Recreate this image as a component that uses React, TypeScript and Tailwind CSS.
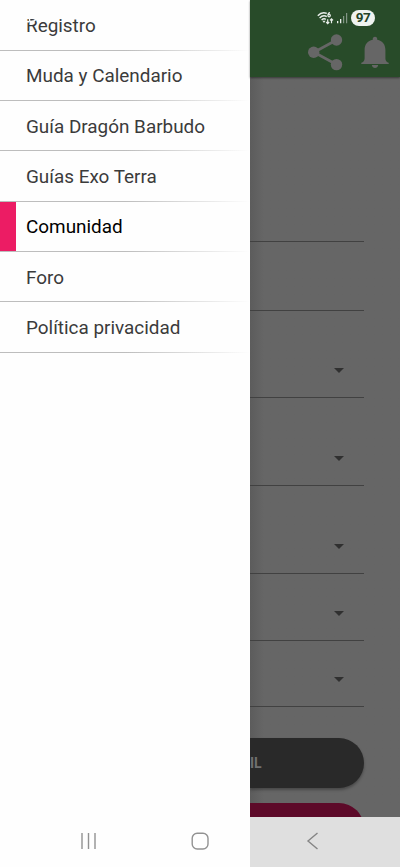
const menuItems = [
  { label: 'Registro' },
  { label: 'Muda y Calendario' },
  { label: 'Guía Dragón Barbudo' },
  { label: 'Guías Exo Terra' },
  { label: 'Comunidad', active: true },
  { label: 'Foro' },
  { label: 'Política privacidad' },
];

const fields = [
  { height: 'h-[163px]', select: false },
  { height: 'h-[69px]', select: false },
  { height: 'h-[87.5px]', select: true },
  { height: 'h-[88px]', select: true },
  { height: 'h-[87.5px]', select: true },
  { height: 'h-[67px]', select: true },
  { height: 'h-[66.5px]', select: true },
];

function StatusIcons() {
  return (
    <div className="flex h-4 items-center pl-[67px]">
      <svg className="h-4 w-[17px] shrink-0" viewBox="0 0 17 16" fill="none" stroke="#e9eeea">
        <path d="M0.8 5.7Q5 1.2 9.8 3.4M2.6 7.9Q6.2 4.3 9.8 6.6M4.6 10Q6.8 8 8.8 9.4" strokeWidth="1.4" />
        <path d="M5.4 10.8L8.6 10.8L7 13Z" fill="#e9eeea" stroke="none" />
        <path d="M13 2.6Q11 2.8 10.9 5.3M10.9 5.6a1.2 1.2 0 1 0 2.4 0a1.2 1.2 0 1 0-2.4 0" strokeWidth="1.2" />
        <path d="M10.7 9.2V13.5M9.2 12L10.7 13.7L12.2 12M14.5 13.2V9M13 10.4L14.5 8.8L16 10.4" strokeWidth="1.2" />
      </svg>
      <svg className="ml-[3px] h-4 w-[11px] shrink-0" viewBox="0 0 11 16">
        <path d="M0 11h1.3v2.2H0zM3 9h1.3v4.2H3z" fill="#e9eeea" />
        <path d="M6 6h1.2v7.2H6zM9 3h1.2v10.2H9z" fill="#839686" />
      </svg>
      <span className="ml-[3px] flex h-4 w-6 items-center justify-center rounded-full bg-[#eff3f0] font-['Roboto','Liberation_Sans',sans-serif] text-[13.5px] font-bold leading-none tracking-[-0.5px] text-[#244326]">
        97
      </span>
    </div>
  );
}

function Header() {
  return (
    <header className="relative z-10 h-[77px] shrink-0 bg-[#284b29] pt-[10px] shadow-[0_1px_2px_rgba(0,0,0,0.45)]">
      <StatusIcons />
      <div className="flex pl-[57px] pt-[7px]">
        <svg className="h-[38px] w-[37px]" viewBox="0 0 37 38" fill="#666">
          <path d="M29.5 7L7 19.3L29.5 31.5" fill="none" stroke="#666" strokeWidth="2.7" />
          <circle cx="29.5" cy="7" r="5.7" />
          <circle cx="6.7" cy="19.3" r="5.7" />
          <circle cx="29.5" cy="31.6" r="5.7" />
        </svg>
        <svg className="ml-4 h-[38px] w-[30px]" viewBox="0 0 30 38" fill="#666">
          <path d="M12.8 6.8C11.9 2.8 18.1 2.8 17.2 6.8C22.5 7.7 25.4 11.5 25.4 17V25.5C25.4 28 26.7 29 28.7 29.8V31H1.3V29.8C3.3 29 4.6 28 4.6 25.5V17C4.6 11.5 7.5 7.7 12.8 6.8Z" />
          <path d="M11.8 32H18.2C17.8 36 12.2 36 11.8 32Z" />
        </svg>
      </div>
    </header>
  );
}

export default function App() {
  return (
    <div className="flex h-[867px] w-[400px] overflow-hidden bg-white font-['Roboto','Liberation_Sans',sans-serif]">
      <aside className="flex w-[250px] shrink-0 flex-col bg-[#fefefe]">
        <nav className="relative">
          {menuItems.map((item) => (
            <div key={item.label} className={item.label === 'Registro' ? 'flex h-[50.8px] flex-col' : 'flex h-[50.33px] flex-col'}>
              <div className="flex min-h-0 flex-1">
                <div className={item.active ? 'w-4 bg-[#ec1c64]' : 'w-4'} />
                <span
                  className={
                    item.active
                      ? 'flex items-center pl-[10px] pt-[2.4px] text-[18.9px] text-black'
                      : 'flex items-center pl-[10px] pt-[2.4px] text-[18.9px] text-[#3b3b3b]'
                  }
                >
                  {item.label}
                </span>
              </div>
              <div className="h-px shrink-0 bg-linear-to-r from-[#bdbdbd] from-50% to-[#fefefe]" />
            </div>
          ))}
          {/* lower edge of the white status bar clock, over the first entry */}
          <svg className="absolute left-[26px] top-[17px] h-[7px] w-[50px]" viewBox="0 0 50 7" fill="none" stroke="#fefefe" strokeWidth="1.5">
            <path d="M0 4.7H3M3.5 0V4.7M6 4.5Q9 4.5 10.5 1M12.5 4.5H15M21 4.7H24M29 4.5H32" />
          </svg>
        </nav>
        <footer className="mt-auto flex h-[52px] items-center">
          <svg className="ml-20 h-[18px] w-[17px]" viewBox="0 0 17 18" stroke="#929292" strokeWidth="1.4">
            <path d="M2 1V17M8.5 1V17M15 1V17" />
          </svg>
          <svg className="ml-[94px] h-[18px] w-[18px]" viewBox="0 0 18 18" fill="none" stroke="#929292" strokeWidth="1.4">
            <rect x="1.2" y="1.2" width="15.8" height="15.8" rx="5" />
          </svg>
        </footer>
      </aside>

      <main className="flex w-[150px] shrink-0 flex-col bg-[#666]">
        <Header />
        <section className="flex min-h-0 flex-1 flex-col overflow-hidden bg-linear-to-r from-[#5c5c5c] to-[#666] to-[14px] pt-[1.5px]">
          {fields.map((field, i) => (
            <div key={i} className={`${field.height} flex w-[114px] shrink-0 items-end justify-end border-b border-[#414141] pr-5`}>
              {field.select && (
                <svg className="mb-6 h-[5px] w-[10px]" viewBox="0 0 10 5" fill="#303030">
                  <path d="M0 0H10L5 5Z" />
                </svg>
              )}
            </div>
          ))}
          <div className="mt-[31px] flex h-[50px] w-[114px] shrink-0 items-center rounded-r-full bg-[#292929] font-['Roboto','Liberation_Sans',sans-serif] text-[14px] font-bold text-[#707070] shadow-[0_2px_3px_rgba(0,0,0,0.3)]">
            <span className="pt-px">IL</span>
          </div>
          <div className="mt-[15px] h-[50px] w-[114px] shrink-0 rounded-r-full bg-[#5d0a29]" />
        </section>
        <footer className="flex h-[50px] shrink-0 items-center bg-[#dfdfdf] pl-[56px]">
          <svg className="mb-[2px] h-[18px] w-3" viewBox="0 0 12 18" fill="none" stroke="#858585" strokeWidth="1.4">
            <path d="M11.5 1L2 9L11.5 17" />
          </svg>
        </footer>
      </main>
    </div>
  );
}
